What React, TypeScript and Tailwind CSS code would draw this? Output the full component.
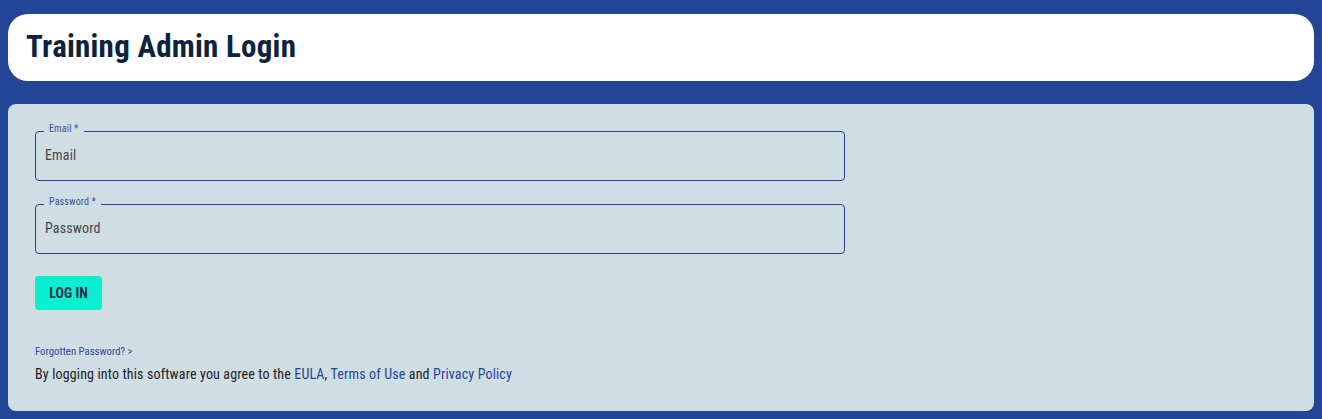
import React from 'react'

const FONT = { fontFamily: 'Roboto, "Liberation Sans", sans-serif' }

interface FieldProps {
  label: string
  placeholder: string
  type?: string
}

const OutlinedField = ({ label, placeholder, type = 'text' }: FieldProps) => {
  return (
    <div className="relative h-[50px] w-[810px] rounded-[4px] border border-[#2443a0]">
      <span className="absolute -top-[10px] left-[8px] bg-[#cfdee3] px-[5px] text-[10px] leading-[14px] tracking-[0.15px] text-[#3a4ea0] font-stretch-condensed">
        {label} *
      </span>
      <input
        type={type}
        placeholder={placeholder}
        className="h-full w-full bg-transparent px-[9px] pb-[2px] text-[14px] tracking-[0.15px] text-[#333] placeholder:text-[#444] outline-none font-stretch-condensed"
      />
    </div>
  )
}

const App = () => {
  return (
    <div className="min-h-[419px] bg-[#224596] px-2 pt-[14px] pb-2" style={FONT}>
      <div className="flex h-[67px] items-center rounded-[20px] bg-white px-[19px]">
        <h1 className="-ml-px text-[31px] font-bold tracking-[0.25px] text-[#0c2340] font-stretch-condensed">
          Training Admin Login
        </h1>
      </div>

      <div className="mt-[23px] h-[307px] rounded-[8px] bg-[#cfdee3] px-[27px] pt-[27px]">
        <div className="flex flex-col gap-[23px]">
          <OutlinedField label="Email" placeholder="Email" />
          <OutlinedField label="Password" placeholder="Password" type="password" />
        </div>

        <button className="mt-[22px] h-[34px] w-[67px] rounded-[4px] bg-[#0aeed2] text-[14px] font-bold text-[#25304a] font-stretch-condensed">
          LOG IN
        </button>

        <div className="mt-[35px] text-[10.8px] leading-[14px] text-[#2f46a0] font-stretch-condensed">
          <a href="#">Forgotten Password? &gt;</a>
        </div>
        <p className="mt-[5px] text-[14px] tracking-[0.15px] text-[#222] font-stretch-condensed">
          By logging into this software you agree to the{' '}
          <a href="#" className="text-[#2443a0]">EULA</a>,{' '}
          <a href="#" className="text-[#2443a0]">Terms of Use</a> and{' '}
          <a href="#" className="text-[#2443a0]">Privacy Policy</a>
        </p>
      </div>
    </div>
  )
}

export default App
